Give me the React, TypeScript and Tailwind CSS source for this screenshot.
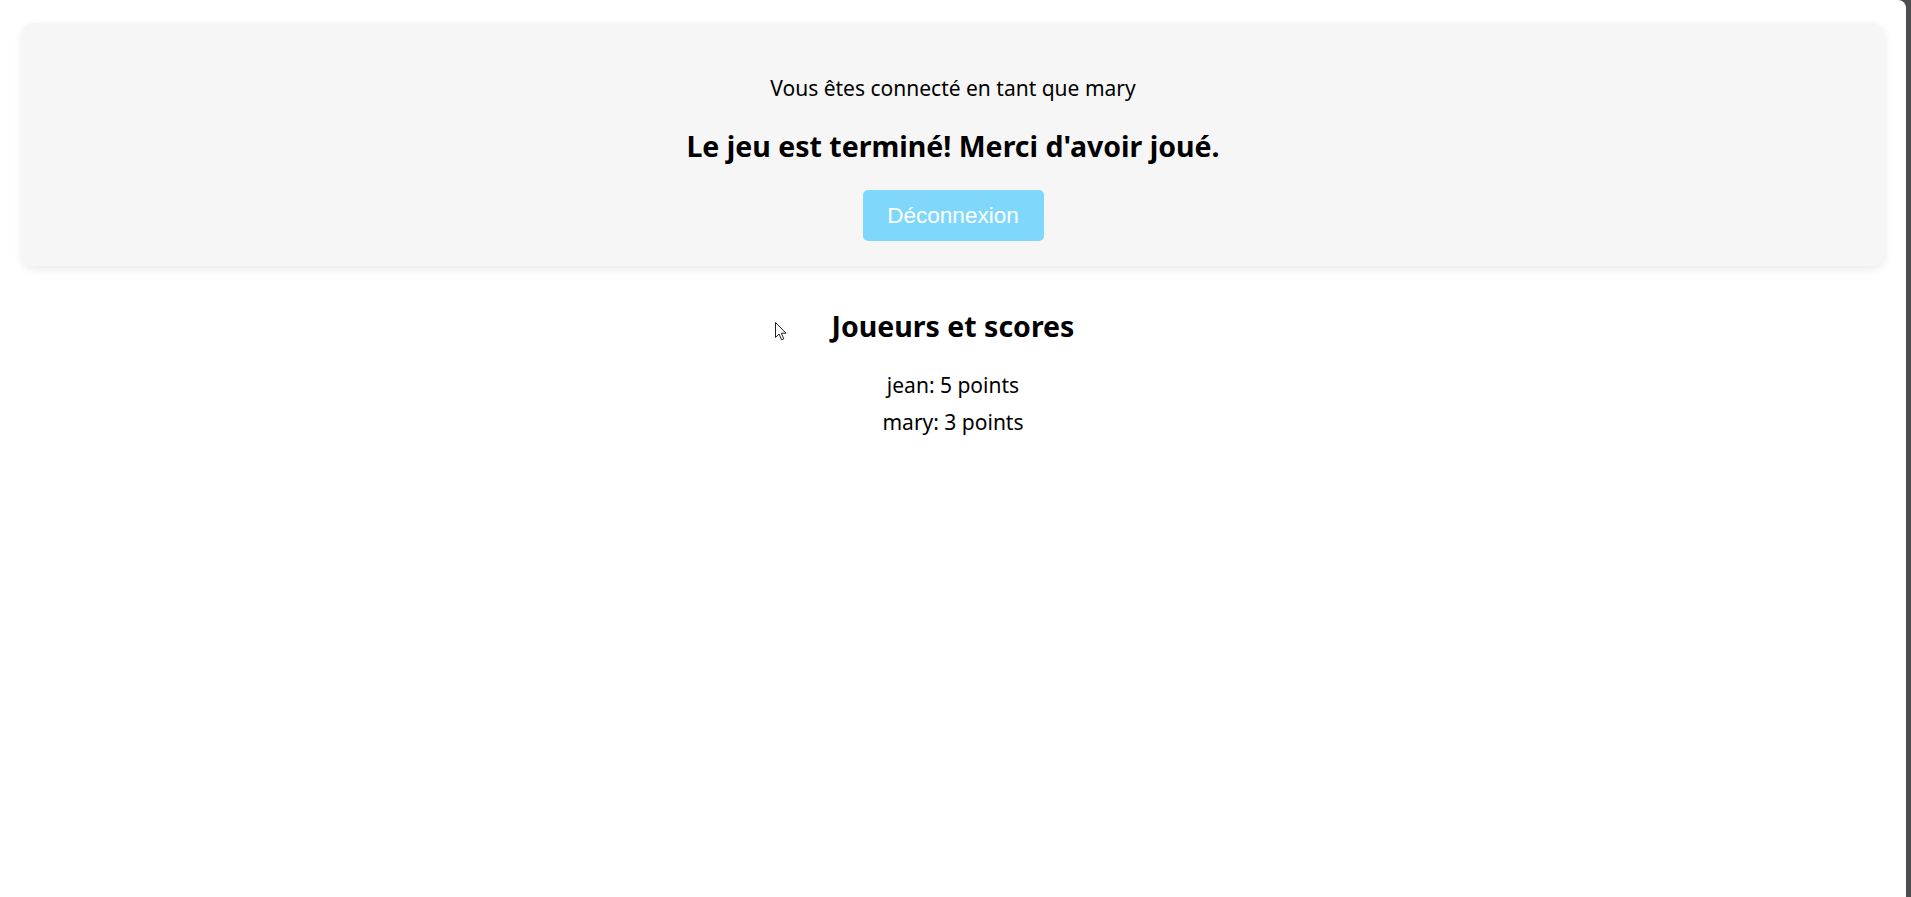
import React from "react";

const segoe = { fontFamily: '"Noto Sans", "Open Sans", sans-serif' };

export default function App() {
  return (
    <div className="flex h-[897px] w-full bg-[#4d4d4f]">
      <main
        className="relative flex-1 min-w-0 h-full bg-white rounded-tr-[8px] text-black overflow-hidden"
        style={segoe}
      >
        <section className="mx-[22px] mt-[23px] rounded-[12px] bg-[#f6f6f6] shadow-[0_3px_10px_rgba(0,0,0,0.09)] pt-[51px] pb-[25px] flex flex-col items-center">
          <p className="text-[21px] leading-[28px]">Vous êtes connecté en tant que mary</p>
          <h2 className="mt-[26px] text-[28.5px] leading-[36px] font-bold">
            Le jeu est terminé! Merci d'avoir joué.
          </h2>
          <button
            className="mt-[26px] h-[51px] w-[181px] rounded-[5px] bg-[#7fd8fb] text-white text-[22.5px]"
            style={{ fontFamily: '"Liberation Sans", Arial, sans-serif' }}
          >
            Déconnexion
          </button>
        </section>

        <section className="mt-[42px] flex flex-col items-center">
          <h2 className="text-[28.5px] leading-[36px] font-bold">Joueurs et scores</h2>
          <ul className="mt-[23px] flex flex-col items-center text-[21px] leading-[37px]">
            <li>jean: 5 points</li>
            <li>mary: 3 points</li>
          </ul>
        </section>

        <svg
          className="absolute left-[775px] top-[322px]"
          width="13"
          height="19"
          viewBox="0 0 13 19"
        >
          <path
            d="M0.5 0.5 L0.5 15.5 L4 12 L6.6 17.8 L8.8 16.8 L6.3 11.2 L11 11.2 Z"
            fill="#ffffff"
            stroke="#222"
            strokeWidth="1"
            strokeLinejoin="round"
          />
        </svg>
      </main>
      <div className="w-[5px] shrink-0" />
    </div>
  );
}
